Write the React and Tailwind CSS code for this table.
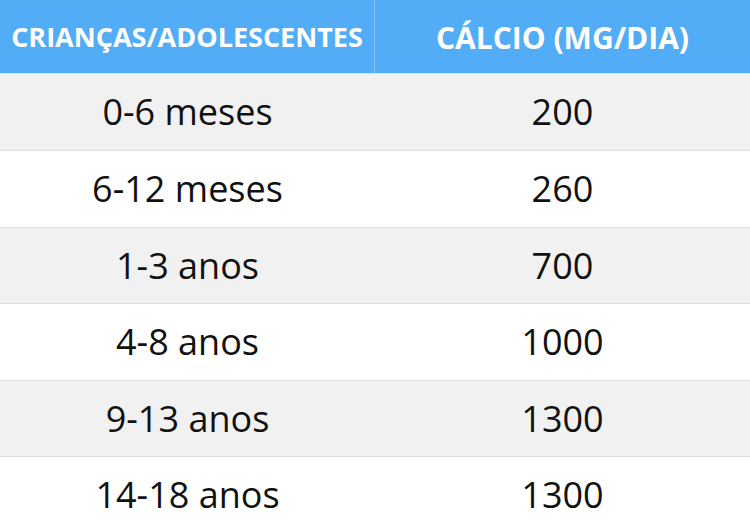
import React from "react";

const rows = [
  ["0-6 meses", "200", "h-[77px]"],
  ["6-12 meses", "260", "h-[77px]"],
  ["1-3 anos", "700", "h-[76px]"],
  ["4-8 anos", "1000", "h-[77px]"],
  ["9-13 anos", "1300", "h-[76px]"],
  ["14-18 anos", "1300", "h-[77px]"],
];

export default function App() {
  return (
    <div className="w-[750px] h-[532px] overflow-hidden bg-white" style={{ fontFamily: '"Open Sans", sans-serif' }}>
      <div className="grid grid-cols-[375px_375px] h-[73px] bg-[#52adf6] text-white font-bold">
        <div className="flex items-center justify-center border-r border-[#86c6f7] text-[27px] pt-[1px]">CRIANÇAS/ADOLESCENTES</div>
        <div className="flex items-center justify-center text-[30px] pt-[1px]">CÁLCIO (MG/DIA)</div>
      </div>
      {rows.map((r, i) => (
        <div
          key={i}
          className={`grid grid-cols-[375px_375px] ${r[2]} border-t border-[#dedede] text-[36px] text-[#111] ${i % 2 === 0 ? "bg-[#f1f1f1]" : "bg-white"}`}
        >
          <div className="flex items-center justify-center">{r[0]}</div>
          <div className="flex items-center justify-center">{r[1]}</div>
        </div>
      ))}
    </div>
  );
}
